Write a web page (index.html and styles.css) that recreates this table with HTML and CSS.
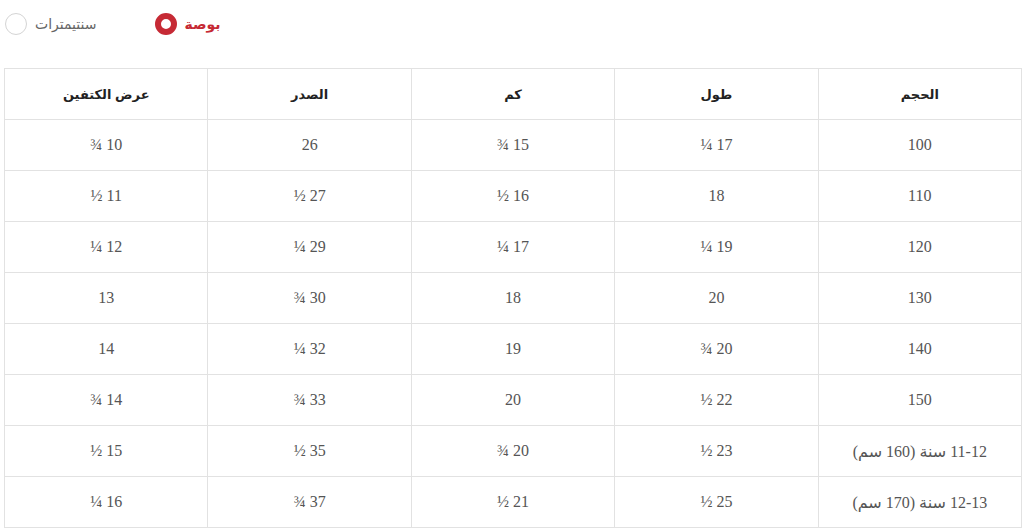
FILE: index.html
```html
<!DOCTYPE html>
<html lang="ar">
<head>
<meta charset="utf-8">
<link rel="stylesheet" href="styles.css">
</head>
<body>
<div class="units">
  <label class="unit"><span class="radio"></span><span class="unit-label">سنتيمترات</span></label>
  <label class="unit active"><span class="radio"></span><span class="unit-label">بوصة</span></label>
</div>
<table class="sizes" dir="rtl">
  <thead>
    <tr><th>الحجم</th><th>طول</th><th>كم</th><th>الصدر</th><th>عرض الكتفين</th></tr>
  </thead>
  <tbody>
    <tr><td>100</td><td>17 ¼</td><td>15 ¾</td><td>26</td><td>10 ¾</td></tr>
    <tr><td>110</td><td>18</td><td>16 ½</td><td>27 ½</td><td>11 ½</td></tr>
    <tr><td>120</td><td>19 ¼</td><td>17 ¼</td><td>29 ¼</td><td>12 ¼</td></tr>
    <tr><td>130</td><td>20</td><td>18</td><td>30 ¾</td><td>13</td></tr>
    <tr><td>140</td><td>20 ¾</td><td>19</td><td>32 ¼</td><td>14</td></tr>
    <tr><td>150</td><td>22 ½</td><td>20</td><td>33 ¾</td><td>14 ¾</td></tr>
    <tr><td>11-12 سنة (160 سم)</td><td>23 ½</td><td>20 ¾</td><td>35 ½</td><td>15 ½</td></tr>
    <tr><td>12-13 سنة (170 سم)</td><td>25 ½</td><td>21 ½</td><td>37 ¾</td><td>16 ¼</td></tr>
  </tbody>
</table>
</body>
</html>
```
FILE: styles.css
```css
html, body {
  margin: 0;
  padding: 0;
  background: #fff;
}
body {
  padding: 12px 2px 0 4px;
  font-family: "Liberation Serif", "DejaVu Sans", serif;
  color: #555;
}
.units {
  display: flex;
  align-items: center;
  gap: 58px;
  height: 23px;
  margin-left: 1px;
}
.unit {
  display: flex;
  align-items: center;
  gap: 8px;
  font-family: "Liberation Sans", "DejaVu Sans", sans-serif;
  font-size: 14px;
  color: #666;
}
.radio {
  box-sizing: border-box;
  width: 22px;
  height: 22px;
  border-radius: 50%;
  border: 1px solid #d4d4d4;
  background: #fff;
}
.unit.active .radio {
  border: 6.5px solid #c62a35;
}
.unit.active .unit-label {
  color: #c62a35;
  font-weight: bold;
}
.sizes {
  margin-top: 33px;
  width: 1018px;
  border-collapse: collapse;
  table-layout: fixed;
  font-size: 16px;
}
.sizes th, .sizes td {
  border: 1px solid #e2e2e2;
  height: 50px;
  padding: 0;
  text-align: center;
  vertical-align: middle;
}
.sizes th {
  font-family: "Liberation Sans", "DejaVu Sans", sans-serif;
  font-size: 13px;
  font-weight: bold;
  color: #222;
}
.sizes td {
  color: #555;
}
```
